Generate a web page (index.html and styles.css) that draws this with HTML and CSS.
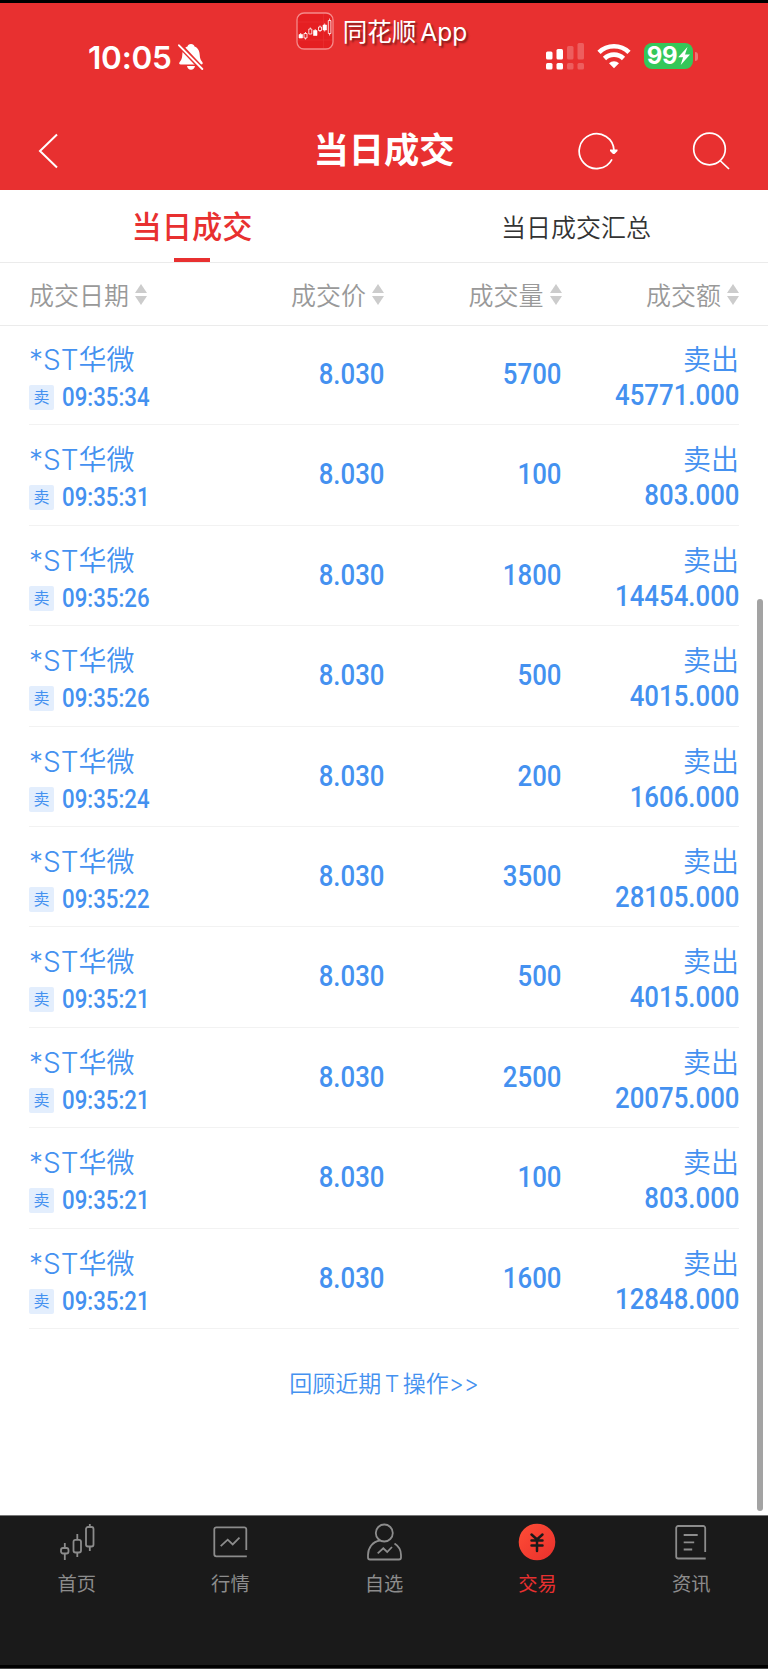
FILE: index.html
```html
<!DOCTYPE html>
<html lang="zh-CN">
<head>
    <meta charset="UTF-8">
    <meta name="viewport" content="width=device-width, initial-scale=1.0">
    <title>当日成交</title>
    <link rel="stylesheet" href="styles.css">
</head>
<body>
    <div class="app">
        <header class="header">
            <div class="status-bar">
                <div class="status-time">
                    <span class="clock">10:05</span>
                    <svg class="bell" viewBox="0 0 26 28" width="26" height="28">
                        <path d="M13 1c2 0 3.200 1 3.500 2.600 3.600 1.300 5 4.400 5.200 8.200.1 4 1.300 5.600 2.600 7.200.9 1.300.4 2.500-1 2.500H2.700c-1.500 0-2-1.200-1-2.500 1.300-1.600 2.500-3.200 2.600-7.200.2-3.800 1.600-6.900 5.200-8.200C9.800 2 11 1 13 1zM9 23h8c-.4 2.300-2 3.800-4 3.800S9.400 25.300 9 23z" fill="#fff"/>
                        <path d="M0 .5 25 27" stroke="#e83030" stroke-width="5"/>
                        <path d="M1 2.300 24.300 26" stroke="#fff" stroke-width="1.900" stroke-linecap="round"/>
                    </svg>
                </div>
                <div class="app-badge">
                    <svg viewBox="0 0 38 38" width="38" height="38">
                        <rect x="1" y="1" width="36" height="36" rx="7" fill="#e51f22" stroke="#f58a8a" stroke-width="1.300"/>
                        <path d="M27.500 2v34M2 28h34M2 10h34" stroke="#ea3336" stroke-width=".6"/>
                        <path d="M3 22.500h3.500v3.500H3zM17.500 18.500h3.500v5h-3.500zM27 13h3.500v5H27z" fill="#fff" stroke="#fff" stroke-width=".6"/>
                        <path d="M4.700 21v2M8 21.500h3v4.500H8zM9.500 20v1.500M9.500 26v1.500M12.800 17h3v5h-3zM14.300 15.500V17M19.200 17v2M22.500 15h3v3.500h-3zM24 13.500V15M24 18.500V20M28.700 11.500v8M32.300 8.500h2.600v13h-2.600zM33.600 6.500v2M33.600 21.500v2" fill="none" stroke="#fff" stroke-width=".8"/>
                    </svg>
                    <span>同花顺 App</span>
                </div>
                <div class="status-icons">
                    <svg viewBox="0 0 38 28" width="38" height="28">
                        <g fill="#fff">
                            <rect x="0" y="8.500" width="6.500" height="8" rx="1.500"/>
                            <rect x="0" y="20" width="6.500" height="6.500" rx="1.500"/>
                            <rect x="10.500" y="6" width="6.500" height="10.500" rx="1.500"/>
                            <rect x="10.500" y="20" width="6.500" height="6.500" rx="1.500"/>
                        </g>
                        <g fill="#fff" opacity=".22">
                            <rect x="21" y="3" width="6.500" height="13.500" rx="1.500"/>
                            <rect x="21" y="20" width="6.500" height="6.500" rx="1.500"/>
                            <rect x="31.500" y="0" width="6.500" height="16.500" rx="1.500"/>
                            <rect x="31.500" y="20" width="6.500" height="6.500" rx="1.500"/>
                        </g>
                    </svg>
                    <svg viewBox="0 0 34 26" width="34" height="26">
                        <g fill="none" stroke="#fff" stroke-width="4.600">
                            <path d="M2 9.300a21.500 21.500 0 0 1 30 0"/>
                            <path d="M7.500 15.500a13.600 13.600 0 0 1 19 0"/>
                        </g>
                        <path d="M17 25.200l-5-5a7.200 7.200 0 0 1 10 0z" fill="#fff"/>
                    </svg>
                    <div class="battery">
                        <div class="battery-body">99<svg viewBox="0 0 12 18" width="12" height="18"><path d="M9.500 0 .2 10.200h4.900L2.700 18 12 7.500H7z" fill="#fff"/></svg></div>
                        <div class="battery-cap"></div>
                    </div>
                </div>
            </div>
            <div class="title-bar">
                <svg class="back" viewBox="0 0 20 36" width="20" height="36"><path d="M19 1.500 2 18l17 16.500" fill="none" stroke="#fff" stroke-width="2"/></svg>
                <h1>当日成交</h1>
                <div class="actions">
                    <svg viewBox="0 0 40 38" width="40" height="38">
                        <path d="M34 27.300A17.400 17.400 0 1 1 36 18.500" fill="none" stroke="#fff" stroke-width="1.700"/>
                        <path d="M32 17.500h7.500v1.500l-3 3h-1.500l-3-3z" fill="#fff"/>
                    </svg>
                    <svg viewBox="0 0 38 38" width="38" height="38">
                        <g fill="none" stroke="#fff" stroke-width="1.700"><circle cx="17.500" cy="17" r="15.800"/><path d="M28 28.500 37 37"/></g>
                    </svg>
                </div>
            </div>
        </header>

        <nav class="tabs">
            <div class="tab active">当日成交</div>
            <div class="tab">当日成交汇总</div>
        </nav>

        <div class="columns">
            <div>成交日期<i class="sort"></i></div>
            <div>成交价<i class="sort"></i></div>
            <div>成交量<i class="sort"></i></div>
            <div>成交额<i class="sort"></i></div>
        </div>

        <main class="content">
            <div id="trades"></div>
            <a class="review">回顾近期 T 操作&gt;&gt;</a>
            <div class="scrollbar"></div>
        </main>

        <footer class="bottom-nav">
            <div class="nav-item">
                <svg viewBox="0 0 40 40" width="40" height="40">
                    <g fill="none" stroke="#8c8c8c" stroke-width="1.800">
                        <rect x="4" y="26" width="7.500" height="5.500" rx="2"/><path d="M7.800 21v5M7.800 31.500V38"/>
                        <rect x="16.500" y="17.800" width="7.500" height="12.700" rx="2"/><path d="M20.300 12v6M20.300 30.500v4.500"/>
                        <rect x="29" y="5" width="7.500" height="19.500" rx="2"/><path d="M32.800 2v3M32.800 24.500v4.500"/>
                    </g>
                </svg>
                <span>首页</span>
            </div>
            <div class="nav-item">
                <svg viewBox="0 0 40 40" width="40" height="40">
                    <g fill="none" stroke="#8c8c8c" stroke-width="1.800">
                        <path d="M36.300 28V7.300a2 2 0 0 0-2-2h-28a2 2 0 0 0-2 2v25a2 2 0 0 0 2 2h30.500"/>
                        <path d="M10.700 24.200l7-6.500 5 4.800 6.800-6.800"/>
                    </g>
                </svg>
                <span>行情</span>
            </div>
            <div class="nav-item">
                <svg viewBox="0 0 40 40" width="40" height="40">
                    <g fill="none" stroke="#8c8c8c" stroke-width="1.800">
                        <circle cx="20.300" cy="11" r="8.500"/>
                        <path d="M16 18.500C8.500 19.500 4 26 4 33v2.500a2 2 0 0 0 2 2h29a2 2 0 0 0 2-2V33c0-4.500-2.500-9-6.500-11.500"/>
                        <path d="M13.700 31.300l5.600-5 3.900 3.700 4.800-5"/>
                    </g>
                </svg>
                <span>自选</span>
            </div>
            <div class="nav-item active">
                <svg viewBox="0 0 40 40" width="40" height="40">
                    <defs><linearGradient id="coin" x1="0" y1="0" x2="1" y2="1"><stop offset="0" stop-color="#ff4d36"/><stop offset="1" stop-color="#e8302c"/></linearGradient></defs>
                    <circle cx="19" cy="20" r="18.300" fill="url(#coin)"/>
                    <path d="M13.500 12.500l5.500 5 5.500-5M19 17.500V29M13.500 18.500h11M13.500 23.500h11" fill="none" stroke="#1a1a1a" stroke-width="2.500" stroke-linecap="round"/>
                </svg>
                <span>交易</span>
            </div>
            <div class="nav-item">
                <svg viewBox="0 0 40 40" width="40" height="40">
                    <g fill="none" stroke="#8c8c8c" stroke-width="1.800">
                        <path d="M34.200 30V6a2 2 0 0 0-2-2h-25a2 2 0 0 0-2 2v28.500a2 2 0 0 0 2 2h27.500"/>
                        <path d="M12.700 13h14M12.700 20.300h10.500M12.700 27.500h8.500"/>
                    </g>
                </svg>
                <span>资讯</span>
            </div>
        </footer>
    </div>

    <script>
        const trades = [
            { time: "09:35:34", price: "8.030", volume: "5700", amount: "45771.000" },
            { time: "09:35:31", price: "8.030", volume: "100", amount: "803.000" },
            { time: "09:35:26", price: "8.030", volume: "1800", amount: "14454.000" },
            { time: "09:35:26", price: "8.030", volume: "500", amount: "4015.000" },
            { time: "09:35:24", price: "8.030", volume: "200", amount: "1606.000" },
            { time: "09:35:22", price: "8.030", volume: "3500", amount: "28105.000" },
            { time: "09:35:21", price: "8.030", volume: "500", amount: "4015.000" },
            { time: "09:35:21", price: "8.030", volume: "2500", amount: "20075.000" },
            { time: "09:35:21", price: "8.030", volume: "100", amount: "803.000" },
            { time: "09:35:21", price: "8.030", volume: "1600", amount: "12848.000" },
        ];

        document.getElementById('trades').innerHTML = trades.map(trade => `
            <div class="trade">
                <div>
                    <div class="name">*ST华微</div>
                    <div class="when"><span class="side">卖</span><span class="time">${trade.time}</span></div>
                </div>
                <div class="number">${trade.price}</div>
                <div class="number">${trade.volume}</div>
                <div class="total">
                    <div class="name">卖出</div>
                    <div class="amount">${trade.amount}</div>
                </div>
            </div>`).join('');
    </script>
</body>
</html>
```
FILE: styles.css
```css
* { box-sizing: border-box; }
body { margin: 0; font-family: Inter, "Noto Sans CJK SC", sans-serif; background-color: #fff; }
svg { display: block; flex: none; }
.app { width: 768px; height: 1669px; display: flex; flex-direction: column; border-top: 3px solid #000; border-bottom: 1px solid #444; overflow: hidden; }

.header { height: 187px; background-color: #e83030; color: #fff; flex: none; }
.status-bar { height: 107px; display: grid; grid-template-columns: 1fr auto 1fr; padding: 0 70px; }
.status-time { display: flex; align-items: flex-start; gap: 6px; padding: 40px 0 0 18px; }
.clock { font-size: 31.5px; line-height: 30px; font-weight: 600; letter-spacing: -0.2px; }
.app-badge { display: flex; align-items: flex-start; gap: 9px; padding-top: 9px; margin-right: 5px; font-size: 24.5px; line-height: 40px; word-spacing: -3px; text-shadow: 2px 2px 2px rgba(0,0,0,0.45); white-space: nowrap; }
.status-icons { display: flex; justify-content: flex-end; gap: 13px; padding-top: 40px; }
.battery { display: flex; align-items: center; gap: 2px; height: 26px; }
.battery-body { display: flex; align-items: center; justify-content: center; gap: 1px; width: 49px; height: 26px; border-radius: 8px; background-color: #34c759; font-size: 24px; font-weight: 700; line-height: 26px; letter-spacing: -0.3px; }
.battery-cap { width: 3px; height: 9px; border-radius: 0 3px 3px 0; background-color: #ef7474; }

.title-bar { height: 80px; display: grid; grid-template-columns: 1fr auto 1fr; align-items: center; padding: 1px 38px 0; }
.title-bar h1 { margin: 0; font-size: 35.3px; font-weight: 700; line-height: 50px; }
.actions { display: flex; justify-content: flex-end; gap: 74px; }

.tabs { height: 73px; display: flex; flex: none; border-bottom: 1px solid #ebebeb; }
.tab { flex: 1; display: flex; align-items: center; justify-content: center; font-size: 25px; font-weight: 350; color: #333; position: relative; }
.tab.active { color: #e83030; font-size: 30.2px; font-weight: 500; padding-bottom: 3px; }
.tab.active::after { content: ""; position: absolute; bottom: 0; left: 174px; width: 36px; height: 4px; background-color: #e83030; }

.columns { height: 63px; display: grid; grid-template-columns: repeat(4, 1fr); flex: none; padding: 0 29px; border-bottom: 1px solid #ebebeb; color: #999; font-size: 25px; font-weight: 350; }
.columns div { display: flex; align-items: center; justify-content: flex-end; gap: 6px; }
.columns div:first-child { justify-content: flex-start; }
.sort { display: grid; gap: 3px; }
.sort::before, .sort::after { content: ""; border: 6px solid transparent; border-top: 0; border-bottom: 9px solid #ccc; }
.sort::after { border-bottom: 0; border-top: 9px solid #ccc; }

.content { flex: 1; position: relative; text-align: center; padding: 0 29px; }
#trades { margin-top: -1px; }
.trade { height: 100.4px; display: grid; grid-template-columns: repeat(4, 1fr); border-bottom: 1px solid #f2f2f2; color: #4491f0; text-align: right; }
.trade > div:first-child { text-align: left; }
.name { font-size: 28px; line-height: 36px; padding-top: 17px; font-weight: 350; height: 52px; }
.when { display: flex; align-items: center; gap: 8px; padding-top: 8px; }
.side { width: 25px; height: 25px; border-radius: 2px; background-color: #e3eefd; font-size: 16px; line-height: 25px; text-align: center; }
/* narrow digits */
.time, .number, .amount { font-family: Roboto, sans-serif; font-weight: 500; transform: scaleX(0.89); transform-origin: right; }
.time { font-size: 25px; line-height: 25px; transform-origin: left; }
.number { font-size: 29px; line-height: 98px; }
.amount { font-size: 29px; line-height: 36px; }
.review { display: inline-block; margin-top: 37px; font-size: 23px; font-weight: 350; line-height: 36px; word-spacing: -3px; color: #4491f0; }
.scrollbar { position: absolute; top: 273px; right: 5px; width: 6px; height: 912px; border-radius: 3px; background-color: #a3a3a3; }

.bottom-nav { height: 153px; display: flex; flex: none; background-color: #1a1a1a; border-top: 1px solid #777; border-bottom: 3px solid #000; }
.nav-item { flex: 1; display: flex; flex-direction: column; align-items: center; padding-top: 6px; gap: 7px; color: #8c8c8c; font-size: 19.3px; line-height: 30px; }
.nav-item.active { color: #e83030; }
```
